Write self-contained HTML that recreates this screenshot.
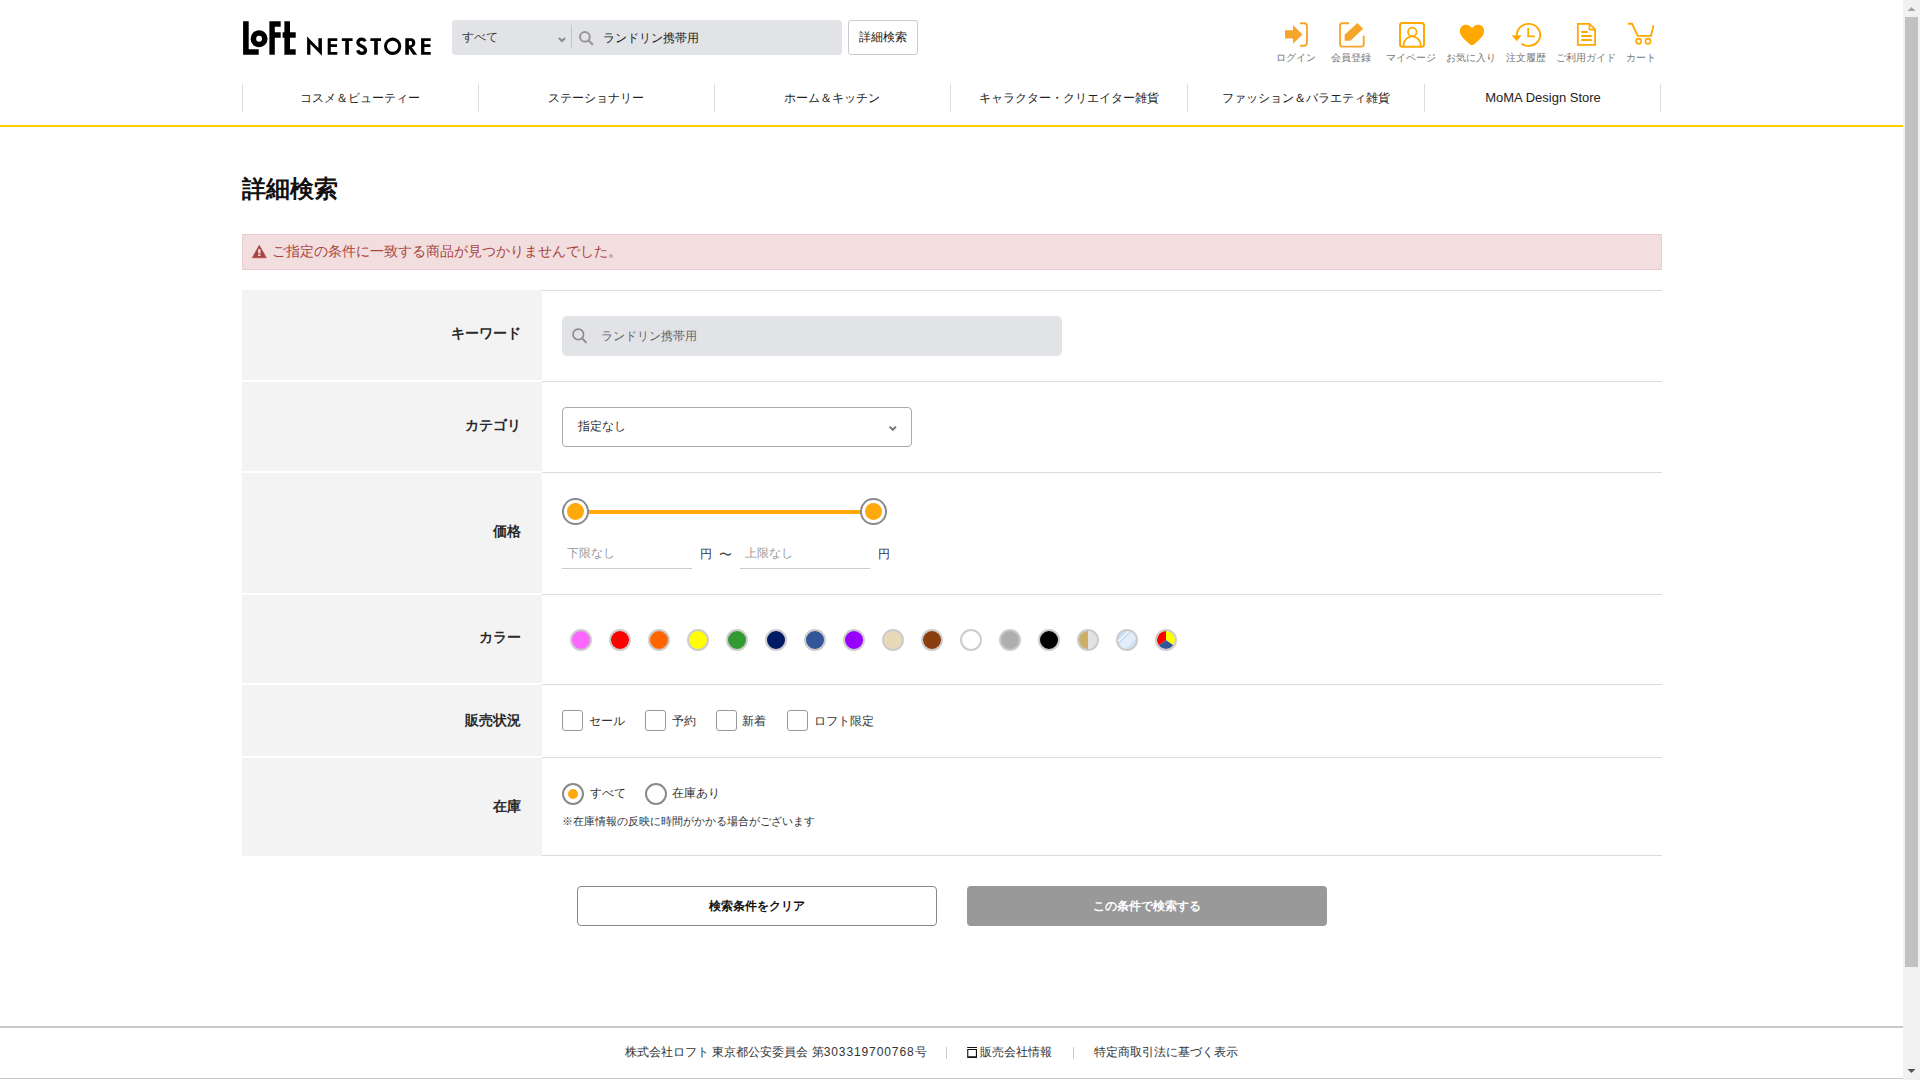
<!DOCTYPE html>
<html lang="ja"><head><meta charset="utf-8"><title>詳細検索</title>
<style>
*{box-sizing:border-box;margin:0;padding:0}
html,body{width:1920px;height:1080px;overflow:hidden;background:#fff}
body{font-family:"Liberation Sans",sans-serif;color:#222;position:relative}
.a{position:absolute}
.t{position:absolute;white-space:nowrap;line-height:1}
#sb{left:1903px;top:0;width:17px;height:1080px;background:#f1f1f1}
#thumb{left:1905px;top:17px;width:13px;height:950px;background:#c1c1c1}
.sbar{left:452px;top:20px;width:390px;height:35px;background:#e2e3e6;border-radius:4px}
.dbtn{left:848px;top:20px;width:70px;height:35px;border:1px solid #ccc;border-radius:3px;background:#fff}
.nsep{top:84px;width:1px;height:28px;background:#ddd}
.navt{top:91.5px;font-size:12.2px;color:#222;text-align:center;width:236px}
.il{top:52.8px;font-size:10px;color:#777;text-align:center;width:70px}
#yl{left:0;top:125px;width:1903px;height:2px;background:#ffcc00}
.lab{left:242px;width:300px;background:#f3f3f3}
.sep{left:542px;width:1120px;height:1px;background:#dcdcdc}
.lt{font-size:14px;font-weight:bold;color:#2a2a2a;left:242px;width:279px;text-align:right}
.sw{top:629px;width:22px;height:22px;border-radius:50%;border:2px solid #ccc}
.cb{top:710px;width:21px;height:21px;border:1px solid #999;border-radius:3px;background:#fff}
.ct{top:714.5px;font-size:12px;color:#333}
</style></head><body>
<div class="a" id="sb"></div>
<div class="a" id="thumb"></div>
<svg class="a" style="left:1903px;top:0" width="17" height="1080">
<path d="M4.5 11 L8.5 7 L12.5 11 Z" fill="#a3a3a3"/>
<path d="M4.5 1069 L12.5 1069 L8.5 1073 Z" fill="#505050"/>
</svg>

<div class="a sbar"></div>
<div class="a dbtn"></div>

<!-- header svg overlay -->
<svg class="a" style="left:0;top:0" width="1700" height="70">
<g fill="#000">
<!-- L -->
<path d="M243.1 21.15H248.7V49.3H258.7V54.7H243.1Z"/>
<!-- o -->
<path fill-rule="evenodd" d="M259.07 30.24A8.5 8.5 0 1 1 259.07 47.24A8.5 8.5 0 1 1 259.07 30.24ZM259.07 35.84A2.9 2.9 0 1 0 259.07 41.64A2.9 2.9 0 1 0 259.07 35.84Z"/>
<!-- F -->
<path d="M269.4 21.15H280.7V26.7H274.8V32.26H280.7V37.8H274.8V54.7H269.4Z"/>
<!-- t -->
<path d="M284.4 21.15H290V32.26H295.7V37.8H290V49.3H295.7V54.7H284.4V37.8H282.6V32.26H284.4Z"/>
<!-- N -->
<path d="M307.1 36.5L318.4 48V38.2H321.9V55.7L310.4 44V54.7H307.1Z"/>
<!-- E -->
<path d="M327.7 38.2H337.3V40.95H330.8V44.2H337V46.95H330.8V51.9H337.3V54.7H327.7Z"/>
<!-- T -->
<path d="M341.8 38.2H352.6V40.95H348.9V54.7H345.25V40.95H341.8Z"/>
<!-- T2 -->
<path d="M370.4 38.2H381.06V40.95H377.8V54.7H374.2V40.95H370.4Z"/>
<!-- R -->
<path fill-rule="evenodd" d="M405.3 38.2H410.8C413.6 38.2 415.3 40.2 415.3 42.7C415.3 45 414 46.7 411.8 47.2L417.2 54.7H413.1L408.9 48.4V54.7H405.3ZM408.9 40.95V45.3H410.6C411.6 45.3 412.1 44.3 412.1 43.1C412.1 41.9 411.6 40.95 410.6 40.95Z"/>
<!-- E2 -->
<path d="M421.1 38.2H430.7V40.95H424.4V44.2H430.4V46.95H424.4V51.9H430.7V54.7H421.1Z"/>
</g>
<g fill="none" stroke="#000">
<path stroke-width="3.3" d="M365.3 41.2C364.5 39.8 363.2 39.1 361.8 39.1C359.6 39.1 357.9 40.5 357.9 42.4C357.9 44.4 359.5 45.2 361.8 46.2C364.2 47.2 365.5 48.3 365.5 50.3C365.5 52.1 364 53.4 361.8 53.4C359.8 53.4 358.3 52.2 357.7 50.2"/>
<circle cx="392.65" cy="46.27" r="7.12" stroke-width="3.06"/>
</g>
<!-- search bar chevron + divider + magnifier -->
<path d="M558.9 38L562 41L565.1 38" fill="none" stroke="#8a8a8a" stroke-width="2"/>
<rect x="571" y="25" width="1" height="22.5" fill="#c4c5c8"/>
<circle cx="584.9" cy="36.8" r="4.9" fill="none" stroke="#989898" stroke-width="2"/>
<path d="M588.6 40.5L592.3 44.3" stroke="#989898" stroke-width="2.2" stroke-linecap="round"/>
<!-- icons -->
<g fill="#f6a52b">
<path d="M1285 30.2H1293V25L1302.5 34.4L1293 43.8V38.6H1285Z"/>
<path d="M1344.6 34.8L1357.5 23.1L1363.2 28.75L1350.4 40.7H1344.6Z"/>
</g>
<g fill="none" stroke="#f6a52b" stroke-width="1.9">
<path d="M1300 23.3H1304Q1307 23.3 1307 26.5V42.5Q1307 45.7 1304 45.7H1300"/>
<path d="M1349 23.2H1342.2Q1340.1 23.2 1340.1 25.3V44.5Q1340.1 46.6 1342.2 46.6H1361.6Q1363.7 46.6 1363.7 44.5V35.8"/>
</g>
<g fill="none" stroke="#ffa800" stroke-width="2">
<rect x="1400" y="23" width="24" height="23.7" rx="2.5"/>
<circle cx="1412.3" cy="31.9" r="4.3" stroke-width="1.8"/>
<path d="M1403.4 46A8.7 9.7 0 0 1 1420.8 46" stroke-width="1.8"/>
<path d="M1521.6 43.65A11.6 11 0 1 0 1517 34.9" stroke-width="1.9"/>
<path d="M1528.2 28.1V36.3H1534.8" stroke-width="1.8"/>
<path d="M1577.8 23.8H1589.5L1595.1 29.4V44.9H1577.8Z" stroke-width="1.8"/>
<path d="M1582 32H1587.2M1582 36H1591M1582 40H1591" stroke-width="1.9" stroke-linecap="round"/>
<path d="M1589.5 24V29.6H1595" stroke-width="1.7" stroke-linejoin="round"/>
<path d="M1628 23.75H1632L1637.8 35.8H1651L1653.6 25.4" stroke-width="1.8"/>
<circle cx="1638.7" cy="41.25" r="2.6" stroke-width="1.6"/>
<circle cx="1648" cy="41.25" r="2.6" stroke-width="1.6"/>
</g>
<g fill="#ffa800">
<path d="M1472 28.2C1473.5 26 1475.5 24.7 1478.3 24.7C1481.6 24.7 1484.1 27.3 1484.1 30.9C1484.1 34.8 1481 38 1477.5 41.3L1474.2 44.2Q1472 46 1469.8 44.2L1466.5 41.3C1463 38 1459.9 34.8 1459.9 30.9C1459.9 27.3 1462.4 24.7 1465.7 24.7C1468.5 24.7 1470.5 26 1472 28.2Z"/>
<path d="M1511.8 35.2H1521.6L1516.7 41.2Z"/>

</g>
</svg>

<div class="t" style="left:462px;top:30.5px;font-size:12px;color:#3a3a3a">すべて</div>
<div class="t" style="left:603px;top:31.5px;font-size:12px;color:#222">ランドリン携帯用</div>
<div class="t" style="left:859px;top:31px;font-size:12px;color:#222">詳細検索</div>

<div class="t il" style="left:1261px">ログイン</div>
<div class="t il" style="left:1316px">会員登録</div>
<div class="t il" style="left:1376px">マイページ</div>
<div class="t il" style="left:1436px">お気に入り</div>
<div class="t il" style="left:1491px">注文履歴</div>
<div class="t il" style="left:1551px">ご利用ガイド</div>
<div class="t il" style="left:1606px">カート</div>

<div class="a nsep" style="left:242px"></div>
<div class="a nsep" style="left:478px"></div>
<div class="a nsep" style="left:714px"></div>
<div class="a nsep" style="left:950px"></div>
<div class="a nsep" style="left:1187px"></div>
<div class="a nsep" style="left:1424px"></div>
<div class="a nsep" style="left:1660px"></div>
<div class="t navt" style="left:242px">コスメ＆ビューティー</div>
<div class="t navt" style="left:478px">ステーショナリー</div>
<div class="t navt" style="left:714px">ホーム＆キッチン</div>
<div class="t navt" style="left:951px">キャラクター・クリエイター雑貨</div>
<div class="t navt" style="left:1188px">ファッション＆バラエティ雑貨</div>
<div class="t navt" style="left:1425px;font-size:13px;top:91px">MoMA Design Store</div>

<div class="a" id="yl"></div>

<div class="t" style="left:242px;top:177px;font-size:24px;font-weight:bold;color:#111">詳細検索</div>

<div class="a" style="left:242px;top:234px;width:1420px;height:36px;background:#f2dede;border:1px solid #ebccd1"></div>
<svg class="a" style="left:250px;top:242px" width="20" height="20">
<path d="M9.3 3.2L16.4 15.8H2.2Z" fill="#a94442" stroke="#a94442" stroke-width="0.6" stroke-linejoin="round"/>
<rect x="8.1" y="7.2" width="2.4" height="4.2" fill="#f2dede"/>
<rect x="8.1" y="12.4" width="2.4" height="1.6" fill="#f2dede"/>
</svg>
<div class="t" style="left:272px;top:243.5px;font-size:14px;color:#a94442">ご指定の条件に一致する商品が見つかりませんでした。</div>

<div class="a lab" style="top:290px;height:90px"></div>
<div class="a lab" style="top:382px;height:89px"></div>
<div class="a lab" style="top:473px;height:120px"></div>
<div class="a lab" style="top:595px;height:88px"></div>
<div class="a lab" style="top:685px;height:71px"></div>
<div class="a lab" style="top:758px;height:98px"></div>
<div class="a sep" style="top:290px"></div>
<div class="a sep" style="top:381px"></div>
<div class="a sep" style="top:472px"></div>
<div class="a sep" style="top:594px"></div>
<div class="a sep" style="top:684px"></div>
<div class="a sep" style="top:757px"></div>
<div class="a sep" style="top:855px"></div>

<div class="t lt" style="top:326px">キーワード</div>
<div class="t lt" style="top:418px">カテゴリ</div>
<div class="t lt" style="top:524px">価格</div>
<div class="t lt" style="top:630px">カラー</div>
<div class="t lt" style="top:713px">販売状況</div>
<div class="t lt" style="top:799px">在庫</div>

<!-- keyword -->
<div class="a" style="left:562px;top:316px;width:500px;height:40px;background:#e2e3e6;border-radius:5px"></div>
<svg class="a" style="left:562px;top:316px" width="40" height="40">
<circle cx="16.3" cy="18.4" r="5.3" fill="none" stroke="#8a8a8a" stroke-width="1.6"/>
<path d="M20.2 22.3L24.5 26.8" stroke="#8a8a8a" stroke-width="1.8"/>
</svg>
<div class="t" style="left:601px;top:329.5px;font-size:12px;color:#666">ランドリン携帯用</div>

<!-- category -->
<div class="a" style="left:562px;top:407px;width:350px;height:40px;background:#fff;border:1px solid #aaa;border-radius:4px"></div>
<div class="t" style="left:578px;top:420px;font-size:12.2px;color:#333">指定なし</div>
<svg class="a" style="left:880px;top:418px" width="24" height="20">
<path d="M9.6 8.6L12.8 11.8L16 8.6" fill="none" stroke="#777" stroke-width="2"/>
</svg>

<!-- price -->
<div class="a" style="left:575px;top:510px;width:298px;height:4px;background:#ffa90a"></div>
<div class="a" style="left:562px;top:498px;width:26.5px;height:26.5px;border-radius:50%;border:2px solid #8a8a8a;background:#fff"></div>
<div class="a" style="left:567px;top:503px;width:16.8px;height:16.8px;border-radius:50%;background:#ffa90a"></div>
<div class="a" style="left:860px;top:498px;width:26.5px;height:26.5px;border-radius:50%;border:2px solid #8a8a8a;background:#fff"></div>
<div class="a" style="left:865px;top:503px;width:16.8px;height:16.8px;border-radius:50%;background:#ffa90a"></div>
<div class="a" style="left:562px;top:568px;width:130px;height:1px;background:#ccc"></div>
<div class="a" style="left:740px;top:568px;width:130px;height:1px;background:#ccc"></div>
<div class="t" style="left:567px;top:547px;font-size:12.1px;color:#999">下限なし</div>
<div class="t" style="left:745px;top:547px;font-size:12.1px;color:#999">上限なし</div>
<div class="t" style="left:700px;top:548px;font-size:12px;color:#333">円</div>
<div class="t" style="left:719px;top:548px;font-size:13px;color:#444">〜</div>
<div class="t" style="left:878px;top:548px;font-size:12px;color:#333">円</div>

<!-- colors -->
<div class="a sw" style="left:570px;background:#ff66ff"></div>
<div class="a sw" style="left:609px;background:#ff0000"></div>
<div class="a sw" style="left:648px;background:#ff6600"></div>
<div class="a sw" style="left:687px;background:#ffff00"></div>
<div class="a sw" style="left:726px;background:#339933"></div>
<div class="a sw" style="left:765px;background:#001a66"></div>
<div class="a sw" style="left:804px;background:#335599"></div>
<div class="a sw" style="left:843px;background:#9900ff"></div>
<div class="a sw" style="left:882px;background:#e8dab6"></div>
<div class="a sw" style="left:921px;background:#8b3e0f"></div>
<div class="a sw" style="left:960px;background:#fff"></div>
<div class="a sw" style="left:999px;background:#afafaf"></div>
<div class="a sw" style="left:1038px;background:#000"></div>
<div class="a sw" style="left:1077px;background:linear-gradient(90deg,#cfae66 50%,#e3e3e3 50%)"></div>
<div class="a sw" style="left:1116px;background:linear-gradient(135deg,#c9def8 0,#c9def8 27%,#f2f7fe 27%,#f2f7fe 32%,#cde0f8 32%,#cde0f8 40%,#e4eefb 40%,#e4eefb 70%,#cfe2f9 70%)"></div>
<svg class="a" style="left:1155px;top:629px" width="22" height="22" viewBox="-11 -11 22 22">
<path d="M0 0L0 -9A9 9 0 0 1 7.28 5.29Z" fill="#ffff00"/>
<path d="M0 0L7.28 5.29A9 9 0 0 1 -7.28 5.29Z" fill="#335599"/>
<path d="M0 0L-7.28 5.29A9 9 0 0 1 0 -9Z" fill="#ff0000"/>
<circle r="10" fill="none" stroke="#ccc" stroke-width="2"/>
</svg>

<!-- sale status -->
<div class="a cb" style="left:562px"></div><div class="t ct" style="left:589px">セール</div>
<div class="a cb" style="left:645px"></div><div class="t ct" style="left:672px">予約</div>
<div class="a cb" style="left:716px"></div><div class="t ct" style="left:742px">新着</div>
<div class="a cb" style="left:787px"></div><div class="t ct" style="left:814px">ロフト限定</div>

<!-- stock -->
<div class="a" style="left:562px;top:783px;width:22px;height:22px;border-radius:50%;border:2px solid #8a8a8a;background:#fff"></div>
<div class="a" style="left:568px;top:789px;width:10px;height:10px;border-radius:50%;background:#ffa90a"></div>
<div class="t ct" style="left:590px;top:787px">すべて</div>
<div class="a" style="left:645px;top:783px;width:22px;height:22px;border-radius:50%;border:2px solid #8a8a8a;background:#fff"></div>
<div class="t ct" style="left:672px;top:787px">在庫あり</div>
<div class="t" style="left:562px;top:816px;font-size:11px;color:#333">※在庫情報の反映に時間がかかる場合がございます</div>

<!-- buttons -->
<div class="a" style="left:577px;top:886px;width:360px;height:40px;border:1px solid #888;border-radius:4px;background:#fff"></div>
<div class="t" style="left:577px;top:899.5px;width:360px;text-align:center;font-size:12px;font-weight:bold;color:#111">検索条件をクリア</div>
<div class="a" style="left:967px;top:886px;width:360px;height:40px;border-radius:4px;background:#999"></div>
<div class="t" style="left:967px;top:899.5px;width:360px;text-align:center;font-size:12px;font-weight:bold;color:#fff">この条件で検索する</div>

<!-- footer -->
<div class="a" style="left:0;top:1026px;width:1903px;height:2px;background:#c8c8c8"></div>
<div class="a" style="left:0;top:1078px;width:1903px;height:1px;background:#c8c8c8"></div>
<div class="t" style="left:625px;top:1046px;font-size:12px;color:#333">株式会社ロフト 東京都公安委員会 第<span style="letter-spacing:0.9px">303319700768</span>号</div>
<div class="a" style="left:946px;top:1047px;width:1px;height:12px;background:#ccc"></div>
<svg class="a" style="left:960px;top:1040px" width="20" height="20"><rect x="7.2" y="7" width="9.8" height="1" fill="#111"/><path fill-rule="evenodd" fill="#111" d="M7.2 9H17V17.9H7.2ZM8.3 10.1V16.2H15.9V10.1Z"/></svg>
<div class="t" style="left:980px;top:1046px;font-size:12px;color:#333">販売会社情報</div>
<div class="a" style="left:1073px;top:1047px;width:1px;height:12px;background:#ccc"></div>
<div class="t" style="left:1094px;top:1046px;font-size:12px;color:#333">特定商取引法に基づく表示</div>

</body></html>
